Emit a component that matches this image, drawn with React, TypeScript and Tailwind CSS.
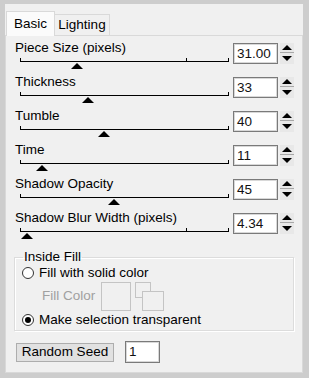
import React from "react";

type Row = { label: string; value: string; thumb: number; mid?: boolean };

const rows: Row[] = [
  { label: "Piece Size (pixels)", value: "31.00", thumb: 57, mid: true },
  { label: "Thickness", value: "33", thumb: 68 },
  { label: "Tumble", value: "40", thumb: 84 },
  { label: "Time", value: "11", thumb: 22 },
  { label: "Shadow Opacity", value: "45", thumb: 94 },
  { label: "Shadow Blur Width (pixels)", value: "4.34", thumb: 7, mid: true },
];

function Spinner() {
  return (
    <div className="ml-[2px] flex h-[21px] w-[14px] flex-col">
      <div className="flex h-[10px] items-center justify-center border-b border-[#a8a8a8] bg-[#e8e8e8]">
        <div className="h-0 w-0 border-x-[5px] border-b-[5px] border-x-transparent border-b-black" />
      </div>
      <div className="flex h-[11px] items-center justify-center bg-[#e8e8e8]">
        <div className="h-0 w-0 border-x-[5px] border-t-[5px] border-x-transparent border-t-black" />
      </div>
    </div>
  );
}

function NumBox({ value, w = "w-[45px]", h = "h-[21px]" }: { value: string; w?: string; h?: string }) {
  return (
    <div
      className={`flex ${h} ${w} items-center border border-[#7a7a7a] bg-white pl-[3px] text-[13.5px] leading-none text-[#111] shadow-[inset_0_0_0_1px_#d8d8d8]`}
    >
      {value}
    </div>
  );
}

function Slider({ thumb, mid }: { thumb: number; mid?: boolean }) {
  return (
    <div className="relative ml-[5px] h-[18px] w-[209px]">
      <div className="absolute left-0 top-[5px] h-px w-[209px] bg-black" />
      <div className="absolute left-0 top-[2px] h-[4px] w-px bg-black" />
      <div className="absolute left-[208px] top-[2px] h-[4px] w-px bg-black" />
      {mid && <div className="absolute left-[166px] top-[2px] h-[4px] w-px bg-black" />}
      <div
        className="absolute top-[7px] h-0 w-0 border-x-[6px] border-b-[6px] border-x-transparent border-b-black"
        style={{ left: thumb - 6 }}
      />
    </div>
  );
}

function Radio({ checked }: { checked?: boolean }) {
  return (
    <div className="flex h-[12px] w-[12px] items-center justify-center rounded-full border border-[#333] bg-white">
      {checked && <div className="h-[6px] w-[6px] rounded-full bg-black" />}
    </div>
  );
}

export default function App() {
  return (
    <div
      className="h-[378px] w-[309px] bg-[#cdcdcd] pl-[5px] pr-[6px] pt-[4px] pb-[5px] text-black"
      style={{ fontFamily: '"Liberation Sans", Arial, sans-serif' }}
    >
      <div className="flex h-full flex-col bg-[#f0f0f0]">
        <div className="flex h-[31px] items-end pl-[1px]">
          <div className="relative z-10 -mb-px flex h-[25px] w-[49px] items-center justify-center border border-b-0 border-[#d9d9d9] bg-[#fbfbfb] text-[13.5px]">
            Basic
          </div>
          <div className="flex h-[21px] w-[55px] items-center justify-center border border-b-0 border-l-0 border-[#d9d9d9] bg-[#f0f0f0] text-[13.5px]">
            Lighting
          </div>
        </div>
        <div className="flex flex-1 flex-col border border-[#d9d9d9] bg-[#f0f0f0] pt-[4px]">
          {rows.map((r) => (
            <div key={r.label} className="flex h-[34px]">
              <div className="w-[227px] pl-[9px]">
                <div className="h-[16px] text-[13.5px] leading-[16px]">{r.label}</div>
                <Slider thumb={r.thumb} mid={r.mid} />
              </div>
              <div className="mt-[3px] flex">
                <NumBox value={r.value} />
                <Spinner />
              </div>
            </div>
          ))}

          <fieldset className="ml-[8px] mt-[5px] h-[82px] w-[280px] border border-[#dcdcdc] shadow-[inset_1px_1px_0_#fff,1px_1px_0_#fff] pl-[7px]">
            <legend className="ml-[1px] px-[1px] text-[13.5px] leading-[16px]">Inside Fill</legend>
            <div className="flex h-[16px] items-center gap-[5px] text-[13.5px]">
              <Radio />
              <span>Fill with solid color</span>
            </div>
            <div className="mt-[1px] flex items-start">
              <span className="ml-[20px] mt-[6px] text-[13.5px] leading-[16px] text-[#a0a0a0]">Fill Color</span>
              <div className="ml-[6px] h-[29px] w-[30px] border border-[#c4c4c4] bg-[#f0f0f0]" />
              <div className="relative ml-[4px] h-[29px] w-[29px]">
                <div className="absolute left-0 top-0 h-[16px] w-[16px] border border-[#c4c4c4] bg-[#f0f0f0]" />
                <div className="absolute left-[7px] top-[9px] h-[20px] w-[22px] border border-[#c4c4c4] bg-[#f0f0f0]" />
              </div>
            </div>
            <div className="mt-[1px] flex h-[16px] items-center gap-[5px] text-[13.5px]">
              <Radio checked />
              <span>Make selection transparent</span>
            </div>
          </fieldset>

          <div className="mt-[10px] flex items-center pl-[10px]">
            <div className="flex h-[19px] w-[98px] items-center justify-center border border-[#adadad] bg-[#e1e1e1] text-[13.5px]">
              Random Seed
            </div>
            <div className="ml-[11px]">
              <NumBox value="1" w="w-[35px]" h="h-[22px]" />
            </div>
          </div>
        </div>
      </div>
    </div>
  );
}
